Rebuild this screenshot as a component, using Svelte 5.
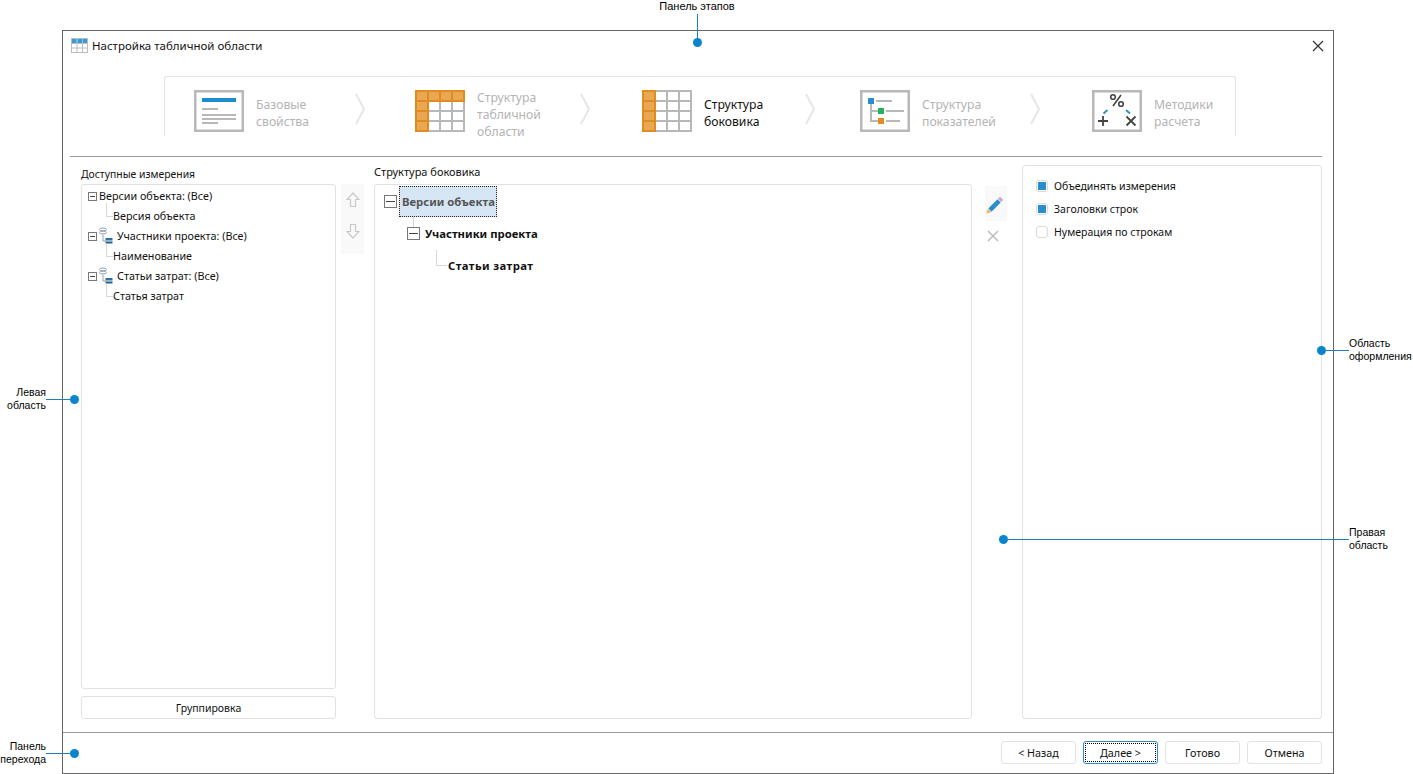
<script>
  const tableRows = [1, 11, 21, 31, 41];
  const tableCols = [1, 13, 25, 37, 49];

  const dims = [
    { name: 'Версии объекта: (Все)', child: 'Версия объекта', db: false },
    { name: 'Участники проекта: (Все)', child: 'Наименование', db: true },
    { name: 'Статьи затрат: (Все)', child: 'Статья затрат', db: true }
  ];

  const options = [
    { label: 'Объединять измерения', on: true },
    { label: 'Заголовки строк', on: true },
    { label: 'Нумерация по строкам', on: false }
  ];
</script>

{#snippet grid()}
  {#each tableRows as y}
    <line x1="0" x2="50" y1={y} y2={y} stroke="#b8b8b8" stroke-width="2" />
  {/each}
  {#each tableCols as x}
    <line x1={x} x2={x} y1="0" y2="42" stroke="#b8b8b8" stroke-width="2" />
  {/each}
{/snippet}

{#snippet chevron()}
  <svg class="chev" width="10" height="32" viewBox="0 0 10 32">
    <polyline points="1,1 9,16 1,31" fill="none" stroke="#e6e6e6" stroke-width="2" />
  </svg>
{/snippet}

{#snippet dbIcon()}
  <svg class="db" width="14" height="17" viewBox="0 0 14 17">
    <ellipse cx="4" cy="2.500" rx="3.500" ry="1.500" fill="none" stroke="#8f9aa5" />
    <ellipse cx="4" cy="5.500" rx="3.500" ry="1.500" fill="none" stroke="#8f9aa5" />
    <path d="M4 8v6h3" fill="none" stroke="#9aa3ab" />
    <path d="M6.500 11h7v2.500h-7z" fill="#2f6f9f" />
    <path d="M6.500 14.500h7v2h-7z" fill="#1f5f8f" />
  </svg>
{/snippet}

<div class="page">
  <div class="window">
    <header class="title">
      <svg width="17" height="15" viewBox="0 0 17 15">
        <rect x="0" y="0" width="17" height="5" fill="#3d9ad1" />
        <path d="M.5 0v15M6 0v15M11.5 0v15M16.5 0v15M0 .5h17M0 5.500h17M0 10h17M0 14.500h17" fill="none" stroke="#b9bec2" />
        <path d="M6 0v5M11.500 0v5" stroke="#8cc3e4" />
      </svg>
      <span class="title-text">Настройка табличной области</span>
      <svg class="close" width="12" height="12" viewBox="0 0 12 12">
        <path d="M1 1l10 10M11 1L1 11" stroke="#333" stroke-width="1.200" />
      </svg>
    </header>

    <nav class="steps">
      <div class="step s1">
        <svg width="50" height="42" viewBox="0 0 50 42">
          <rect x="1.250" y="1.250" width="47.500" height="39.500" fill="#fff" stroke="#b8b8b8" stroke-width="2.500" />
          <rect x="8" y="8" width="34" height="4" fill="#1d8ccf" />
          <path d="M8 19h16M8 25h34M8 29h34M8 33h16" stroke="#b8b8b8" stroke-width="2" />
        </svg>
        <div class="label">Базовые<br />свойства</div>
        {@render chevron()}
      </div>
      <div class="step s2">
        <svg width="50" height="42" viewBox="0 0 50 42">
          {@render grid()}
          <path d="M0 0h50v12H14v30H0z" fill="#e9a653" />
          <path d="M1 1h48M1 11h48M1 21h12M1 31h12M1 41h12M1 0v42M13 0v42M25 0v12M37 0v12M49 0v12" fill="none" stroke="#e08c20" stroke-width="2" />
        </svg>
        <div class="label">Структура<br />табличной<br />области</div>
        {@render chevron()}
      </div>
      <div class="step s3 active">
        <svg width="50" height="42" viewBox="0 0 50 42">
          {@render grid()}
          <path d="M0 0h14v42H0z" fill="#e9a653" />
          <path d="M1 1h12M1 11h12M1 21h12M1 31h12M1 41h12M1 0v42M13 0v42" fill="none" stroke="#e08c20" stroke-width="2" />
        </svg>
        <div class="label">Структура<br />боковика</div>
        {@render chevron()}
      </div>
      <div class="step s4">
        <svg width="50" height="42" viewBox="0 0 50 42">
          <rect x="1.250" y="1.250" width="47.500" height="39.500" fill="#fff" stroke="#b8b8b8" stroke-width="2.500" />
          <rect x="8" y="8" width="6" height="6" fill="#2a8dcd" />
          <rect x="18" y="18" width="6" height="6" fill="#22b35e" />
          <rect x="18" y="28" width="6" height="6" fill="#e08c20" />
          <path d="M16 11h16M26 21h18M26 31h14M11 14v17h7M11 21h7" fill="none" stroke="#b8b8b8" stroke-width="2" />
        </svg>
        <div class="label">Структура<br />показателей</div>
        {@render chevron()}
      </div>
      <div class="step s5">
        <svg width="50" height="42" viewBox="0 0 50 42">
          <rect x="1.250" y="1.250" width="47.500" height="39.500" fill="#fff" stroke="#b8b8b8" stroke-width="2.500" />
          <circle cx="21" cy="7" r="2.300" fill="none" stroke="#444" stroke-width="1.600" />
          <circle cx="29" cy="14" r="2.300" fill="none" stroke="#444" stroke-width="1.600" />
          <path d="M29 5L21 16" stroke="#444" stroke-width="1.600" />
          <path d="M6 31h10M11 26v10M34.500 26.500l9 9M43.500 26.500l-9 9" stroke="#444" stroke-width="1.800" />
          <path d="M11.500 23.500l4-3.500M34 20l4 3.500" stroke="#2a8dcd" stroke-width="1.800" />
        </svg>
        <div class="label">Методики<br />расчета</div>
      </div>
    </nav>

    <div class="main">
      <section class="left">
        <div class="cap">Доступные измерения</div>
        <div class="box dim-list">
          {#each dims as d}
            <div class="row">
              <span class="minus small"></span>
              {#if d.db}{@render dbIcon()}{/if}
              <span class:db-name={d.db}>{d.name}</span>
            </div>
            <div class="row child"><span>{d.child}</span></div>
          {/each}
        </div>
        <button class="btn wide">Группировка</button>
      </section>

      <div class="arrows">
        <svg width="14" height="16" viewBox="0 0 14 16">
          <path d="M7 1l6 6.500H9.500v7h-5v-7H1z" fill="none" stroke="#c9c9c9" stroke-width="1.200" />
        </svg>
        <svg width="14" height="16" viewBox="0 0 14 16">
          <path d="M7 15L1 8.500h3.500v-7h5v7H13z" fill="none" stroke="#c9c9c9" stroke-width="1.200" />
        </svg>
      </div>

      <section class="mid">
        <div class="cap mid-cap">Структура боковика</div>
        <div class="box side-tree">
          <div class="node n1">
            <span class="minus"></span>
            <span class="sel">Версии объекта</span>
          </div>
          <div class="node n2">
            <span class="minus"></span>
            <span class="bold">Участники проекта</span>
          </div>
          <div class="node n3">
            <span class="bold">Статьи затрат</span>
          </div>
        </div>
      </section>

      <div class="tools">
        <div class="tool-bg">
          <svg class="pencil" width="18" height="18" viewBox="0 0 18 18">
            <path d="M14 .8l3.200 3.200-2 2L12 2.800z" fill="#cf9fd6" />
            <path d="M11.500 3.300l3.200 3.200-9.200 9.200-3.200-3.200z" fill="#2a8dcd" />
            <path d="M1.800 13l3.200 3.200-4.500 1.300z" fill="#eeb04e" />
          </svg>
        </div>
        <svg class="del" width="12" height="12" viewBox="0 0 12 12">
          <path d="M1 1l10 10M11 1L1 11" stroke="#bdbdbd" stroke-width="1.500" />
        </svg>
      </div>

      <section class="box right">
        {#each options as o}
          <div class="opt">
            <span class="check">{#if o.on}<i></i>{/if}</span>
            <span>{o.label}</span>
          </div>
        {/each}
      </section>
    </div>

    <footer class="foot">
      <button class="btn">&lt; Назад</button>
      <button class="btn focus"><span>Далее &gt;</span></button>
      <button class="btn">Готово</button>
      <button class="btn">Отмена</button>
    </footer>
  </div>

  <div class="call c-top"><span class="txt">Панель этапов</span><i class="ln"></i><b class="dot"></b></div>
  <div class="call c-left"><span class="txt">Левая<br />область</span><i class="ln"></i><b class="dot"></b></div>
  <div class="call c-nav"><span class="txt">Панель<br />перехода</span><i class="ln"></i><b class="dot"></b></div>
  <div class="call c-design"><b class="dot"></b><i class="ln"></i><span class="txt">Область<br />оформления</span></div>
  <div class="call c-right"><b class="dot"></b><i class="ln"></i><span class="txt">Правая<br />область</span></div>
</div>

<style>
  :global(body) {
    margin: 0;
    background: #fff;
  }

  .page {
    position: relative;
    width: 1413px;
    height: 774px;
    padding: 30px 0 0 62px;
    box-sizing: border-box;
    overflow: hidden;
    font-family: "Noto Sans", sans-serif;
    font-size: 10.75px;
    color: #111;
  }

  .window {
    width: 1272px;
    height: 744px;
    box-sizing: border-box;
    border: 1px solid #666;
    display: flex;
    flex-direction: column;
    background: #fff;
  }

  .title {
    height: 29px;
    flex: none;
    display: flex;
    align-items: center;
    padding: 0 9px 0 8px;
    font-size: 11.5px;
  }

  .title-text {
    margin-left: 4px;
    flex: 1;
  }

  .steps {
    flex: none;
    height: 60px;
    width: 1072px;
    margin: 16px 0 20px 101px;
    box-sizing: border-box;
    border: 1px solid #e2e2e2;
    border-bottom: 0;
    border-radius: 3px 3px 0 0;
    padding: 13px 0 0 29px;
    display: flex;
  }

  .step {
    display: flex;
    align-items: flex-start;
    flex: none;
  }

  .s1 { width: 221px; }
  .s2 { width: 227px; }
  .s3 { width: 218px; }
  .s4 { width: 232px; }

  .step .label {
    margin-left: 12px;
    font-size: 12.2px;
    line-height: 17px;
    color: #b4b4b4;
    white-space: nowrap;
    margin-top: 6px;
  }

  .s2 .label { margin-top: -1px; }
  .step.active .label { color: #111; }

  .chev {
    flex: none;
    margin-top: 3px;
    margin-left: auto;
  }

  .s1 .chev { margin-right: 50px; }
  .s2 .chev { margin-right: 52px; }
  .s3 .chev { margin-right: 45px; }
  .s4 .chev { margin-right: 52px; }

  .main {
    flex: 1;
    min-height: 0;
    border-top: 1px solid #999;
    margin: 0 11px 0 7px;
    padding: 8px 0 13px 11px;
    display: flex;
  }

  .box {
    border: 1px solid #e2e2e2;
    border-radius: 3px;
    box-sizing: border-box;
  }

  .cap {
    height: 19px;
    line-height: 18px;
    font-size: 10.4px;
  }

  .mid-cap {
    line-height: 14px;
    font-size: 11px;
  }

  .left {
    width: 255px;
    flex: none;
    display: flex;
    flex-direction: column;
  }

  .dim-list {
    flex: 1;
    padding: 1px 0 0 6px;
  }

  .row {
    position: relative;
    height: 20px;
    display: flex;
    align-items: center;
  }

  .row .minus { margin-right: 2px; }
  .db { margin: -1px 0 0 0; }
  .db-name { margin-left: 4px; }

  .row.child {
    padding-left: 25px;
  }

  .row.child::before {
    content: '';
    position: absolute;
    left: 18px;
    top: -3px;
    width: 6px;
    height: 13px;
    border-left: 1px solid #d8d8d8;
    border-bottom: 1px solid #d8d8d8;
  }

  .minus {
    position: relative;
    flex: none;
    display: inline-block;
    width: 13px;
    height: 13px;
    box-sizing: border-box;
    border: 1px solid #777;
    background: #fff;
  }

  .minus::after {
    content: '';
    position: absolute;
    left: 1px;
    right: 1px;
    top: 5px;
    height: 1px;
    background: #444;
  }

  .minus.small {
    width: 9px;
    height: 9px;
  }

  .minus.small::after {
    top: 3px;
  }

  .btn {
    height: 23px;
    width: 75px;
    padding: 0;
    box-sizing: border-box;
    background: #fff;
    border: 1px solid #e2e2e2;
    border-radius: 3px;
    font: inherit;
    color: #111;
  }

  .btn.wide {
    width: 100%;
    flex: none;
    margin-top: 7px;
    font-size: 10.5px;
  }

  .btn.focus {
    border-color: #2a8dcd;
    padding: 1px;
  }

  .btn.focus span {
    display: block;
    height: 100%;
    box-sizing: border-box;
    line-height: 18px;
    border: 1px dotted #000;
  }

  .arrows {
    width: 23px;
    height: 70px;
    flex: none;
    margin: 19px 10px 0 5px;
    background: #f9f9f9;
    display: flex;
    flex-direction: column;
    align-items: center;
    gap: 15px;
    padding-top: 8px;
    box-sizing: border-box;
  }

  .mid {
    width: 598px;
    flex: none;
    display: flex;
    flex-direction: column;
  }

  .side-tree {
    flex: 1;
    padding: 1px 0 0 9px;
  }

  .node {
    position: relative;
    display: flex;
    align-items: center;
    font-weight: 700;
    font-size: 11.3px;
  }

  .n1 { height: 31px; }
  .n2 { height: 32px; padding-left: 23px; }
  .n3 { height: 32px; padding-left: 64px; letter-spacing: .4px; }

  .n1 .sel {
    margin-left: 2px;
    height: 100%;
    width: 98px;
    box-sizing: border-box;
    padding-left: 2px;
    display: flex;
    align-items: center;
    background: #d6e6f4;
    border: 1px dotted #222;
    color: #555;
  }

  .n2 .bold { margin-left: 5px; }

  .n2::before {
    content: '';
    position: absolute;
    left: 29px;
    top: -1px;
    height: 11px;
    border-left: 1px solid #d8d8d8;
  }

  .n3::before {
    content: '';
    position: absolute;
    left: 52px;
    top: 1px;
    width: 10px;
    height: 15px;
    border-left: 1px solid #d8d8d8;
    border-bottom: 1px solid #d8d8d8;
  }

  .tools {
    width: 22px;
    flex: none;
    margin: 21px 15px 0 13px;
    display: flex;
    flex-direction: column;
    align-items: center;
  }

  .tool-bg {
    width: 22px;
    height: 35px;
    background: #f9f9f9;
    display: flex;
    align-items: center;
    justify-content: center;
  }

  .pencil {
    margin: 2px 2px 0 0;
  }

  .del {
    margin: 9px 7px 0 0;
  }

  .right {
    width: 300px;
    flex: none;
    padding: 8px 0 0 13px;
    font-size: 10.5px;
  }

  .opt {
    height: 23px;
    display: flex;
    align-items: center;
    gap: 6px;
  }

  .check {
    width: 12px;
    height: 12px;
    box-sizing: border-box;
    border: 1px solid #dcdcdc;
    border-radius: 3px;
    display: flex;
    align-items: center;
    justify-content: center;
  }

  .check i {
    width: 8px;
    height: 8px;
    background: #2a8dcd;
  }

  .foot {
    flex: none;
    height: 41px;
    box-sizing: border-box;
    border-top: 1px solid #999;
    padding: 8px 11px 0 0;
    display: flex;
    justify-content: flex-end;
    gap: 7px;
  }

  .call {
    position: absolute;
    display: flex;
    align-items: center;
    font-family: "Liberation Sans", Arial, sans-serif;
    font-size: 10.5px;
    line-height: 13px;
    color: #000;
  }

  .txt {
    white-space: nowrap;
  }

  .ln {
    display: block;
    background: #1f7fb8;
    height: 1px;
    flex: none;
  }

  .dot {
    display: block;
    width: 9px;
    height: 9px;
    flex: none;
    border-radius: 50%;
    background: #0a84cc;
  }

  .c-top {
    left: 647px;
    top: 0;
    width: 100px;
    flex-direction: column;
    font-size: 11px;
  }

  .c-top .ln {
    width: 1px;
    height: 25px;
    margin-top: 1px;
  }

  .c-top .dot {
    margin-top: -1px;
  }

  .c-left, .c-nav {
    right: calc(1413px - 79px);
    text-align: right;
  }

  .c-left { top: 386px; }
  .c-nav { top: 740px; }

  .c-left .ln, .c-nav .ln { width: 24px; }

  .c-design {
    left: 1317px;
    top: 337px;
  }

  .c-right {
    left: 999px;
    top: 526px;
  }

  .c-design .ln { width: 23px; }
  .c-right .ln { width: 341px; }
</style>
